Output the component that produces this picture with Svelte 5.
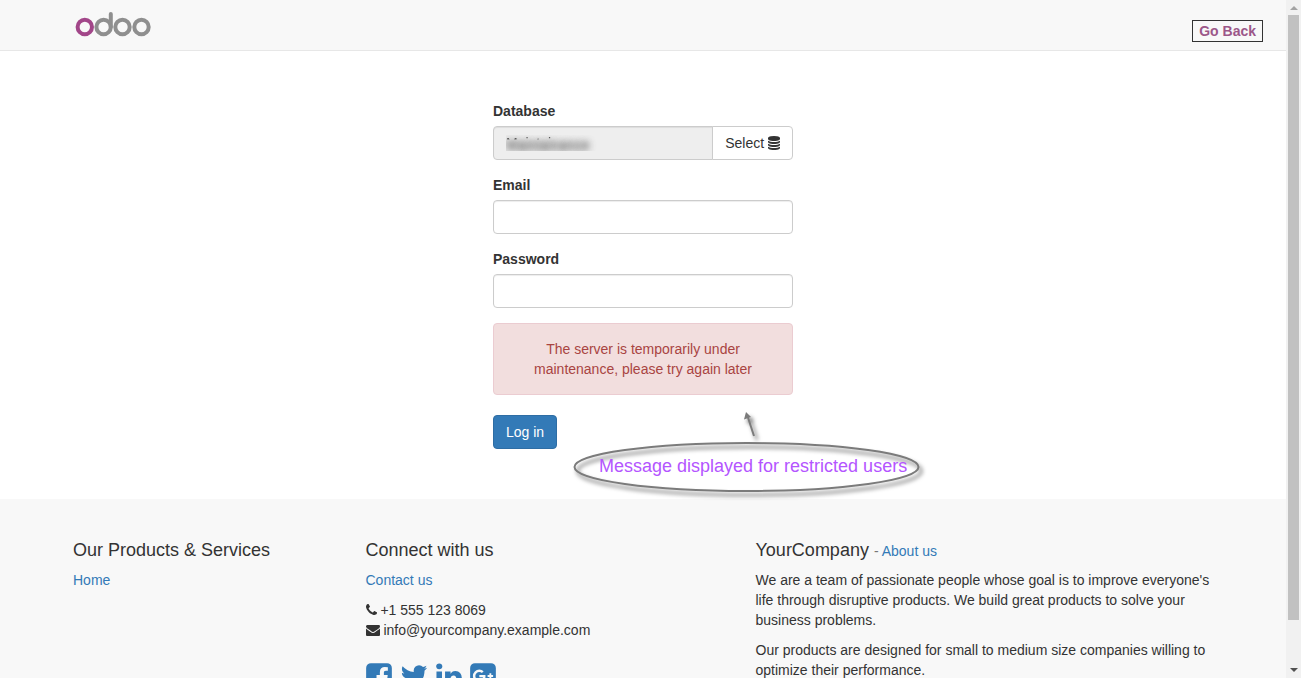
<script>
  let email = $state('');
  let password = $state('');
  let database = $state('Maintainance');

  const social = [
    {
      name: 'Facebook',
      box: '128 0 1536 1792',
      width: 26,
      path: 'M1376 128q119 0 203.5 84.5t84.5 203.5v960q0 119-84.5 203.5t-203.5 84.5h-188v-595h199l30-232h-229v-148q0-56 23.5-84t91.5-28l122-1v-207q-63-9-178-9-136 0-217.5 80t-81.5 226v171h-200v232h200v595h-532q-119 0-203.5-84.5t-84.5-203.5v-960q0-119 84.5-203.5t203.5-84.5h960z'
    },
    {
      name: 'Twitter',
      box: '64 0 1664 1792',
      width: 28,
      path: 'M1684 408q-67 98-162 167 1 14 1 42 0 130-38 259.5t-115.5 248.5-184.5 210.5-258 146-323 54.5q-271 0-496-145 35 4 78 4 225 0 401-138-105-2-188-64.5t-114-159.5q33 5 61 5 43 0 85-11-112-23-185.5-111.5t-73.5-205.5v-4q68 38 146 41-66-44-105-115t-39-154q0-88 44-163 121 149 294.5 238.5t371.5 99.5q-8-38-8-74 0-134 94.5-228.5t228.5-94.5q140 0 236 102 109-21 205-78-37 115-142 178 93-10 186-50z'
    },
    {
      name: 'LinkedIn',
      box: '128 0 1536 1792',
      width: 26,
      path: 'M477 625v991h-330v-991h330zm21-306q1 73-50.5 122t-135.5 49h-2q-82 0-132-49t-50-122q0-74 51.5-122.5t134.5-48.5 133 48.5 51 122.5zm1166 729v568h-329v-530q0-105-40.5-164.5t-126.5-59.5q-63 0-105.5 34.5t-63.5 85.5q-11 30-11 81v553h-329q2-399 2-647t-1-296l-1-48h329v144h-2q20-32 41-56t56.500-52 87-43.500 114.500-15.500q171 0 275 113.500t104 332.500z'
    },
    {
      name: 'Google Plus',
      box: '128 0 1536 1792',
      width: 26,
      path: 'M1045 905q0-26-6-64h-362v132h217q-3 24-16.5 50t-37.5 53-66.5 44.5-96.5 17.5q-99 0-169-71t-70-171 70-171 169-71q92 0 153 59l104-101q-108-100-257-100-160 0-272 112.5t-112 271.5 112 271.5 272 112.5q165 0 266.5-105t101.5-270zm345 46h109v-110h-109v-110h-110v110h-110v110h110v110h110v-110zm274-535v960q0 119-84.5 203.5t-203.5 84.5h-960q-119 0-203.5-84.5t-84.5-203.5v-960q0-119 84.5-203.5t203.5-84.5h960q119 0 203.5 84.5t84.5 203.5z'
    }
  ];
</script>

<div class="shell">
  <div class="page">
    <header>
      <a class="logo" href="#home" aria-label="odoo">
        <svg width="80" height="50" viewBox="73 0 80 50" fill="none" stroke="#8f8f8f" stroke-width="4">
          <circle cx="84.8" cy="27" r="7.2" stroke="#a24689" />
          <circle cx="103.6" cy="27" r="7.2" />
          <path d="M110.8 27V14" stroke-linecap="round" />
          <circle cx="122.5" cy="27" r="7.2" />
          <circle cx="141.5" cy="27" r="7.2" />
        </svg>
      </a>
      <a class="back" href="#back">Go Back</a>
    </header>

    <main>
      <form onsubmit={(e) => e.preventDefault()}>
        <div class="field">
          <label for="db">Database</label>
          <div class="group">
            <input id="db" class="db" type="text" readonly bind:value={database} />
            <button type="button" class="select">
              Select
              <svg width="12" height="14" viewBox="128 0 1536 1792" aria-hidden="true"><path d="M896 768q237 0 443-43t325-127v170q0 69-103 128t-280 93.5-385 34.5-385-34.5-280-93.5-103-128v-170q119 84 325 127t443 43zm0 768q237 0 443-43t325-127v170q0 69-103 128t-280 93.5-385 34.5-385-34.5-280-93.5-103-128v-170q119 84 325 127t443 43zm0-384q237 0 443-43t325-127v170q0 69-103 128t-280 93.5-385 34.5-385-34.5-280-93.5-103-128v-170q119 84 325 127t443 43zm0-1152q208 0 385 34.5t280 93.5 103 128v128q0 69-103 128t-280 93.5-385 34.5-385-34.5-280-93.5-103-128v-128q0-69 103-128t280-93.5 385-34.5z" /></svg>
            </button>
          </div>
        </div>
        <div class="field">
          <label for="email">Email</label>
          <input id="email" type="text" bind:value={email} />
        </div>
        <div class="field">
          <label for="password">Password</label>
          <input id="password" type="password" bind:value={password} />
        </div>
        <p class="alert" role="alert">The server is temporarily under maintenance, please try again later</p>
        <button type="submit" class="login">Log in</button>

        <div class="note">
          <svg width="360" height="100" viewBox="0 0 360 100" fill="none" stroke="#7b7b7b" stroke-width="2" aria-hidden="true">
            <ellipse cx="176.5" cy="62" rx="172" ry="24" />
            <path d="M184 31L177.5 11" />
            <path d="M176 7L181 12L174 14.5Z" fill="#7b7b7b" stroke="none" />
          </svg>
          <span>Message displayed for restricted users</span>
        </div>
      </form>
    </main>

    <footer>
      <div class="columns">
        <section>
          <h4>Our Products &amp; Services</h4>
          <p><a href="#home">Home</a></p>
        </section>
        <section>
          <h4>Connect with us</h4>
          <p><a href="#contact">Contact us</a></p>
          <p class="line">
            <svg width="11" height="14" viewBox="192 0 1408 1792" aria-hidden="true"><path d="M1600 1240q0 27-10 70.5t-21 68.5q-21 50-122 106-94 51-186 51-27 0-53-3.5t-57.5-12.5-47-14.5-55.5-20.5-49-18q-98-35-175-83-127-79-264-216t-216-264q-48-77-83-175-3-9-18-49t-20.5-55.5-14.5-47-12.5-57.5-3.5-53q0-92 51-186 56-101 106-122 25-11 68.5-21t70.5-10q14 0 21 3 18 6 53 76 11 19 30 54t35 63.5 31 53.5q3 4 17.5 25t21.5 35.5 7 28.5q0 20-28.5 50t-62 55-62 53-28.5 46q0 9 5 22.5t8.5 20.5 14 24 11.5 19q76 137 174 235t235 174q2 1 19 11.5t24 14 20.5 8.5 22.5 5q18 0 46-28.5t53-62 55-62 50-28.5q14 0 28.5 7t35.5 21.5 25 17.5q25 15 53.5 31t63.5 35 54 30q70 35 76 53 3 7 3 21z" /></svg>
            +1 555 123 8069
          </p>
          <p class="line">
            <svg width="14" height="14" viewBox="0 0 1792 1792" aria-hidden="true"><path d="M1792 710v794q0 66-47 113t-113 47h-1472q-66 0-113-47t-47-113v-794q44 49 101 87 362 246 497 345 57 42 92.5 65.5t94.5 48 110 24.5h2q51 0 110-24.5t94.5-48 92.5-65.5q170-123 498-345 57-39 100-87zm0-294q0 79-49 151t-122 123q-376 261-468 325-10 7-42.5 31t-54 38.5-52 32.5-57.5 27-50 9h-2q-23 0-50-9t-57.5-27-52-32.5-54-38.5-42.5-31q-91-64-262-182.5t-205-142.5q-62-42-117-115.5t-55-136.5q0-78 41.5-130t118.5-52h1472q65 0 112.5 47t47.5 113z" /></svg>
            info@yourcompany.example.com
          </p>
          <div class="social">
            {#each social as s}
              <a href="#{s.name}" aria-label={s.name}>
                <svg width={s.width} height="30" viewBox={s.box}><path d={s.path} /></svg>
              </a>
            {/each}
          </div>
        </section>
        <section>
          <h4>YourCompany <small>- <a href="#about">About us</a></small></h4>
          <p>We are a team of passionate people whose goal is to improve everyone's life through disruptive products. We build great products to solve your business problems.</p>
          <p>Our products are designed for small to medium size companies willing to optimize their performance.</p>
        </section>
      </div>
    </footer>
  </div>

  <div class="scroll" aria-hidden="true">
    <i class="up"></i>
    <i class="thumb"></i>
    <i class="down"></i>
  </div>
</div>

<style>
  :global(body) {
    background: #fff;
  }
  .shell,
  .shell * {
    box-sizing: border-box;
  }
  .shell {
    display: flex;
    height: 100vh;
    overflow: hidden;
    font: 14px/20px "Liberation Sans", Arial, sans-serif;
    color: #333;
  }
  .page {
    flex: 1;
    min-width: 0;
    display: flex;
    flex-direction: column;
  }
  a {
    color: #337ab7;
    text-decoration: none;
  }
  svg {
    fill: currentColor;
  }
  header {
    display: flex;
    justify-content: space-between;
    align-items: flex-start;
    background: #f8f8f8;
    border-bottom: 1px solid #e7e7e7;
    padding: 0 23px 0 max(15px, calc((100% - 1140px) / 2));
  }
  .logo svg {
    display: block;
    fill: none;
  }
  .back {
    margin-top: 20px;
    padding: 0 6px;
    border: 1px solid #333;
    font-weight: bold;
    color: #9c5789;
  }
  main {
    padding: 50px 15px;
  }
  form {
    position: relative;
    max-width: 300px;
    margin: 0 auto;
  }
  .field {
    margin-bottom: 15px;
  }
  label {
    display: block;
    margin-bottom: 5px;
    font-weight: bold;
  }
  input {
    display: block;
    width: 100%;
    height: 34px;
    padding: 6px 12px;
    border: 1px solid #ccc;
    border-radius: 4px;
    background: #fff;
    box-shadow: inset 0 1px 1px rgba(0, 0, 0, 0.075);
    font: inherit;
    color: #555;
  }
  .group {
    display: flex;
  }
  .group .db {
    flex: 1;
    min-width: 0;
    border-radius: 4px 0 0 4px;
    background: linear-gradient(#555 12px, transparent 13px) text, #eee;
    color: transparent;
    text-shadow: 0 2px 6px #666, 0 2px 8px #999;
  }
  button {
    height: 34px;
    padding: 6px 12px;
    border: 1px solid #ccc;
    border-radius: 4px;
    background: #fff;
    font: inherit;
    color: #333;
    white-space: nowrap;
  }
  .select {
    margin-left: -1px;
    border-radius: 0 4px 4px 0;
  }
  .select svg {
    vertical-align: -2px;
  }
  .alert {
    margin: 0 0 20px;
    padding: 15px;
    border: 1px solid #ebccd1;
    border-radius: 4px;
    background: #f2dede;
    color: #a94442;
    text-align: center;
  }
  .login {
    display: block;
    border-color: #2e6da4;
    background: #337ab7;
    color: #fff;
  }
  .note {
    position: absolute;
    left: 77px;
    top: 304px;
    width: 360px;
    font-size: 18px;
    color: #b455ff;
    pointer-events: none;
  }
  .note svg {
    display: block;
    fill: none;
    filter: drop-shadow(3px 4px 2px rgba(0, 0, 0, 0.6));
  }
  .note span {
    position: absolute;
    left: 29px;
    top: 51px;
    white-space: nowrap;
  }
  footer {
    flex: 1 0 auto;
    padding: 41px 0;
    background: #f8f8f8;
  }
  .columns {
    display: grid;
    grid-template-columns: 3fr 4fr 5fr;
    max-width: 1170px;
    margin: 0 auto;
  }
  section {
    min-width: 0;
    padding: 0 15px;
  }
  h4 {
    margin: 0 0 10px;
    font-size: 18px;
    line-height: 20px;
    font-weight: normal;
  }
  small {
    font-size: 14px;
    line-height: 1;
    color: #777;
  }
  p {
    margin: 0 0 10px;
  }
  .line {
    margin: 0;
  }
  .line svg {
    vertical-align: -2px;
  }
  .social {
    display: flex;
    gap: 8px;
    margin-top: 21px;
  }
  .social svg {
    display: block;
  }
  .scroll {
    width: 15px;
    display: flex;
    flex-direction: column;
    align-items: center;
    background: #f1f1f1;
  }
  .up,
  .down {
    border: 4px solid transparent;
  }
  .up {
    margin: 2px 0 5px;
    border-bottom-color: #a3a3a3;
  }
  .thumb {
    width: 11px;
    height: 605px;
    max-height: 92%;
    background: #c1c1c1;
  }
  .down {
    margin: auto 0 2px;
    border-top-color: #505050;
  }
</style>
